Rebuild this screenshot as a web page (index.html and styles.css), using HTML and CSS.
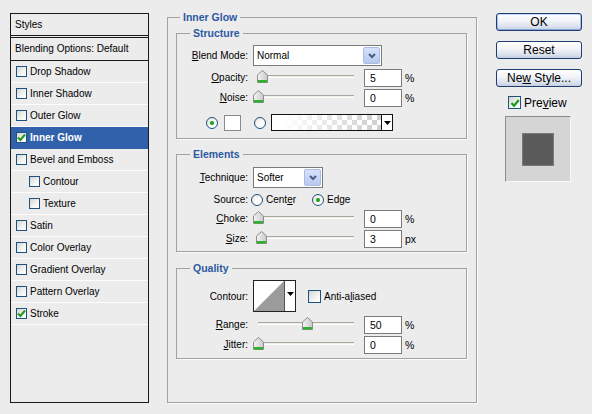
FILE: index.html
```html
<!DOCTYPE html>
<html>
<head>
<meta charset="utf-8">
<title>Layer Style - Inner Glow</title>
<link rel="stylesheet" href="styles.css">
</head>
<body>
<div class="dialog">
  <div class="styles-panel">
    <div class="sp-head">Styles</div>
    <div class="sp-blend">Blending Options: Default</div>
    <ul class="sp-list">
      <li class="sp-item"><span class="cb"></span>Drop Shadow</li>
      <li class="sp-item"><span class="cb"></span>Inner Shadow</li>
      <li class="sp-item"><span class="cb"></span>Outer Glow</li>
      <li class="sp-item selected"><span class="cb"><svg width="9" height="9" viewBox="0 0 9 9"><path d="M1 4.5 L3.4 7 L8 1.5" fill="none" stroke="#1d9a1d" stroke-width="2"/></svg></span>Inner Glow</li>
      <li class="sp-item"><span class="cb"></span>Bevel and Emboss</li>
      <li class="sp-item sub"><span class="cb"></span>Contour</li>
      <li class="sp-item sub"><span class="cb"></span>Texture</li>
      <li class="sp-item"><span class="cb"></span>Satin</li>
      <li class="sp-item"><span class="cb"></span>Color Overlay</li>
      <li class="sp-item"><span class="cb"></span>Gradient Overlay</li>
      <li class="sp-item"><span class="cb"></span>Pattern Overlay</li>
      <li class="sp-item"><span class="cb"><svg width="9" height="9" viewBox="0 0 9 9"><path d="M1 4.5 L3.4 7 L8 1.5" fill="none" stroke="#1d9a1d" stroke-width="2"/></svg></span>Stroke</li>
    </ul>
  </div>

  <div class="group outer">
    <div class="group-title">Inner Glow</div>

    <div class="group inner structure">
      <div class="group-title">Structure</div>
      <div class="row r21">
        <span class="lbl"><u>B</u>lend Mode:</span>
        <div class="select sel-blend"><span class="val">Normal</span><span class="arr"><svg width="8" height="6" viewBox="0 0 8 6"><path d="M1 1 L4 4 L7 1" fill="none" stroke="#4a5d82" stroke-width="2"/></svg></span></div>
      </div>
      <div class="row r19 mt2">
        <span class="lbl"><u>O</u>pacity:</span>
        <div class="slider"><span class="track"></span><svg class="thumb" style="left:4px" width="11" height="13" viewBox="0 0 11 13"><defs><linearGradient id="tg1" x1="0" y1="0" x2="1" y2="0"><stop offset="0" stop-color="#f4f4f4"/><stop offset="1" stop-color="#c9c9c9"/></linearGradient></defs><path d="M0.5 5 L5.5 0.5 L10.5 5 L10.5 12.5 L0.5 12.5 Z" fill="url(#tg1)" stroke="#8c8c8c"/><rect x="1" y="10" width="9" height="2.5" fill="#2fb12f"/></svg></div>
        <span class="num">5</span><span class="unit">%</span>
      </div>
      <div class="row r19 mt1">
        <span class="lbl"><u>N</u>oise:</span>
        <div class="slider"><span class="track"></span><svg class="thumb" style="left:0px" width="11" height="13" viewBox="0 0 11 13"><path d="M0.5 5 L5.5 0.5 L10.5 5 L10.5 12.5 L0.5 12.5 Z" fill="url(#tg1)" stroke="#8c8c8c"/><rect x="1" y="10" width="9" height="2.5" fill="#2fb12f"/></svg></div>
        <span class="num">0</span><span class="unit">%</span>
      </div>
      <div class="row r17 mt7 color-row">
        <span class="radio on"></span>
        <span class="swatch"></span>
        <span class="radio r2"></span>
        <div class="gradpick"><span class="grad"></span><span class="gp-arr"><svg width="7" height="4" viewBox="0 0 7 4"><path d="M0 0 H7 L3.5 4 Z" fill="#000"/></svg></span></div>
      </div>
    </div>

    <div class="group inner elements">
      <div class="group-title">Elements</div>
      <div class="row r21">
        <span class="lbl"><u>T</u>echnique:</span>
        <div class="select sel-tech"><span class="val">Softer</span><span class="arr"><svg width="8" height="6" viewBox="0 0 8 6"><path d="M1 1 L4 4 L7 1" fill="none" stroke="#4a5d82" stroke-width="2"/></svg></span></div>
      </div>
      <div class="row r17 mt3">
        <span class="lbl lbl-src">Source:</span>
        <span class="opt opt1"><span class="radio"></span><span>Cent<u>e</u>r</span></span>
        <span class="opt"><span class="radio on"></span><span>Ed<u>g</u>e</span></span>
      </div>
      <div class="row r19 mt1">
        <span class="lbl"><u>C</u>hoke:</span>
        <div class="slider"><span class="track"></span><svg class="thumb" style="left:0px" width="11" height="13" viewBox="0 0 11 13"><path d="M0.5 5 L5.5 0.5 L10.5 5 L10.5 12.5 L0.5 12.5 Z" fill="url(#tg1)" stroke="#8c8c8c"/><rect x="1" y="10" width="9" height="2.5" fill="#2fb12f"/></svg></div>
        <span class="num">0</span><span class="unit">%</span>
      </div>
      <div class="row r19 mt1">
        <span class="lbl"><u>S</u>ize:</span>
        <div class="slider"><span class="track"></span><svg class="thumb" style="left:3px" width="11" height="13" viewBox="0 0 11 13"><path d="M0.5 5 L5.5 0.5 L10.5 5 L10.5 12.5 L0.5 12.5 Z" fill="url(#tg1)" stroke="#8c8c8c"/><rect x="1" y="10" width="9" height="2.5" fill="#2fb12f"/></svg></div>
        <span class="num">3</span><span class="unit">px</span>
      </div>
    </div>

    <div class="group inner quality">
      <div class="group-title">Quality</div>
      <div class="row r32">
        <span class="lbl">Contour:</span>
        <div class="contour"><svg class="curve" width="30" height="30" viewBox="0 0 30 30"><polygon points="0,30 30,0 30,30" fill="#9b9b9b"/></svg><span class="ct-arr"><svg width="7" height="4" viewBox="0 0 7 4"><path d="M0 0 H7 L3.5 4 Z" fill="#000"/></svg></span></div>
        <span class="cb cb13 aa"></span><span>Anti-a<u>l</u>iased</span>
      </div>
      <div class="row r19 mt3">
        <span class="lbl"><u>R</u>ange:</span>
        <div class="slider"><span class="track"></span><svg class="thumb" style="left:49px" width="11" height="13" viewBox="0 0 11 13"><path d="M0.5 5 L5.5 0.5 L10.5 5 L10.5 12.5 L0.5 12.5 Z" fill="url(#tg1)" stroke="#8c8c8c"/><rect x="1" y="10" width="9" height="2.5" fill="#2fb12f"/></svg></div>
        <span class="num">50</span><span class="unit">%</span>
      </div>
      <div class="row r19 mt1">
        <span class="lbl"><u>J</u>itter:</span>
        <div class="slider"><span class="track"></span><svg class="thumb" style="left:0px" width="11" height="13" viewBox="0 0 11 13"><path d="M0.5 5 L5.5 0.5 L10.5 5 L10.5 12.5 L0.5 12.5 Z" fill="url(#tg1)" stroke="#8c8c8c"/><rect x="1" y="10" width="9" height="2.5" fill="#2fb12f"/></svg></div>
        <span class="num">0</span><span class="unit">%</span>
      </div>
    </div>
  </div>

  <div class="side">
    <div class="btn btn-default">OK</div>
    <div class="btn">Reset</div>
    <div class="btn">Ne<u>w</u> Style...</div>
    <div class="preview-row"><span class="cb cb13"><svg width="10" height="10" viewBox="0 0 10 10"><path d="M1.5 5 L4 7.8 L8.8 2" fill="none" stroke="#1d9a1d" stroke-width="2.2"/></svg></span><span>Pre<u>v</u>iew</span></div>
    <div class="preview"><span class="pv-square"></span></div>
  </div>
</div>
</body>
</html>
```
FILE: styles.css
```css
* { box-sizing: border-box; }
html, body { margin: 0; padding: 0; }
body {
  width: 592px;
  height: 414px;
  overflow: hidden;
  background: #ececec;
  font-family: "Liberation Sans", Arial, sans-serif;
  font-size: 10px;
  color: #000;
}
u { text-decoration: underline; text-underline-offset: 1px; }

.dialog {
  display: flex;
  align-items: flex-start;
  padding: 13px 0 0 10px;
}

/* ---------- Styles list ---------- */
.styles-panel {
  width: 139px;
  height: 390px;
  border: 1px solid #1a1a1a;
  background: #ececec;
  flex: none;
}
.sp-head {
  height: 24px;
  border-bottom: 3px double #1a1a1a;
  padding-left: 4px;
  line-height: 21px;
}
.sp-blend {
  height: 23px;
  border-bottom: 1px solid #1a1a1a;
  padding-left: 4px;
  line-height: 22px;
}
.sp-list { list-style: none; margin: 0; padding: 0; }
.sp-item {
  display: flex;
  align-items: center;
  height: 22px;
  border-bottom: 1px solid #fdfdfd;
  padding-left: 5px;
}
.sp-item.sub { padding-left: 18px; }
.sp-item.selected {
  background: #3161ab;
  color: #fff;
  font-weight: bold;
  border-bottom-color: #3161ab;
}

.cb {
  flex: none;
  width: 11px;
  height: 11px;
  margin-right: 3px;
  border: 1px solid #1c5180;
  background: linear-gradient(135deg, #d4d4ce 0%, #f4f4f2 60%, #fff 100%);
  display: flex;
  align-items: center;
  justify-content: center;
}
.cb13 { width: 13px; height: 13px; }

/* ---------- Group boxes ---------- */
.group {
  position: relative;
  border: 1px solid #a2a2a2;
  box-shadow: 1px 1px 0 #fbfbfb;
}
.group-title {
  position: absolute;
  top: -7px;
  left: 12px;
  padding: 0 3px;
  background: #ececec;
  color: #2c5aa2;
  font-weight: bold;
  font-size: 10.5px;
  line-height: 13px;
}
.outer {
  flex: none;
  width: 310px;
  height: 386px;
  margin: 4px 0 0 18px;
  padding: 15px 0 0 8px;
}
.inner { width: 291px; }
.inner .group-title { left: 13px; }
.structure { height: 106px; padding-top: 11px; }
.elements { height: 98px; margin-top: 15px; padding-top: 12px; }
.quality { height: 91px; margin-top: 16px; padding-top: 11px; }

/* ---------- Rows ---------- */
.row { display: flex; align-items: center; }
.r17 { height: 17px; }
.r19 { height: 19px; }
.r21 { height: 21px; }
.r32 { height: 32px; }
.mt1 { margin-top: 1px; }
.mt2 { margin-top: 2px; }
.mt3 { margin-top: 3px; }
.mt7 { margin-top: 7px; }

.lbl {
  flex: none;
  width: 71px;
  margin-right: 5px;
  text-align: right;
}
.lbl-src { margin-right: 3px; }

/* select */
.select {
  flex: none;
  display: flex;
  height: 21px;
  border: 1px solid #7b7b7b;
  background: #fff;
}
.sel-blend { width: 129px; }
.sel-tech { width: 70px; }
.select .val { flex: 1; padding-left: 3px; line-height: 19px; }
.select .arr {
  flex: none;
  width: 17px;
  margin: 1px;
  border: 1px solid #a8bce4;
  border-radius: 2px;
  background: linear-gradient(#d6e1fb, #b7c9ef);
  display: flex;
  align-items: center;
  justify-content: center;
}

/* slider */
.slider {
  position: relative;
  flex: none;
  width: 106px;
  height: 19px;
}
.track {
  position: absolute;
  left: 5px;
  top: 7px;
  width: 96px;
  height: 3px;
  border-top: 1px solid #a9a9a3;
  border-bottom: 1px solid #ffffff;
  background: #f0efe6;
}
.thumb { position: absolute; top: 2px; }

.num {
  flex: none;
  width: 38px;
  height: 18px;
  margin-left: 5px;
  border: 1px solid #7b7b7b;
  background: #fff;
  padding-left: 5px;
  font-size: 10.5px;
  line-height: 16px;
}
.unit { margin-left: 3px; font-size: 10.5px; }

/* radios */
.radio {
  flex: none;
  width: 12px;
  height: 12px;
  border: 1px solid #1c5180;
  border-radius: 50%;
  background: radial-gradient(circle at 65% 65%, #ffffff 30%, #dcdcd6 100%);
  display: flex;
  align-items: center;
  justify-content: center;
}
.radio.on::after {
  content: "";
  width: 4px;
  height: 4px;
  border-radius: 50%;
  background: #22a322;
  box-shadow: 0 0 1px #7fd07f;
}

.color-row { padding-left: 29px; }
.swatch {
  flex: none;
  width: 17px;
  height: 16px;
  margin-left: 6px;
  border: 1px solid #8a8a8a;
  background: #fff;
}
.radio.r2 { margin-left: 13px; }
.gradpick {
  flex: none;
  display: flex;
  width: 122px;
  height: 17px;
  margin-left: 5px;
  border: 1px solid #111;
  background: #fff;
}
.grad {
  flex: 1;
  background:
    linear-gradient(to right, #ffffff 8%, rgba(255,255,255,0) 95%),
    conic-gradient(#d0d0d0 25%, #ffffff 0 50%, #d0d0d0 0 75%, #ffffff 0) 0 0 / 10px 10px;
}
.gp-arr {
  flex: none;
  width: 11px;
  border-left: 1px solid #111;
  display: flex;
  align-items: center;
  justify-content: center;
}

/* source options */
.opt { display: flex; align-items: center; gap: 3px; flex: none; }
.opt1 { width: 61px; }

/* contour */
.contour {
  flex: none;
  display: flex;
  width: 43px;
  height: 32px;
  border: 1px solid #222;
  background: #fff;
}
.curve { display: block; flex: none; }
.ct-arr {
  flex: none;
  width: 11px;
  border-left: 1px solid #555;
  display: flex;
  align-items: flex-start;
  justify-content: center;
  padding-top: 11px;
}
.aa { margin-left: 12px; }

/* ---------- Right column ---------- */
.side {
  flex: none;
  width: 86px;
  margin-left: 19px;
  display: flex;
  flex-direction: column;
}
.btn {
  height: 18px;
  border: 1px solid #1e3e72;
  border-radius: 3px;
  background: linear-gradient(#ffffff 0%, #f1f3f8 45%, #d9e0ec 80%, #c4cee0 100%);
  font-size: 12px;
  line-height: 16px;
  text-align: center;
}
.btn + .btn { margin-top: 10px; }
.btn-default {
  box-shadow: inset 0 1px 0 #c6d5f4, inset 0 -1px 0 #8aa6dc, inset 1px 0 0 #a9bfea, inset -1px 0 0 #a9bfea;
}
.preview-row {
  display: flex;
  align-items: center;
  height: 15px;
  margin-top: 8px;
  padding-left: 12px;
  font-size: 12px;
}
.preview-row .cb { margin-right: 3px; }
.preview {
  width: 66px;
  height: 66px;
  margin: 6px 0 0 9px;
  border-top: 1px solid #8c8c8c;
  border-left: 1px solid #8c8c8c;
  border-right: 1px solid #f6f6f6;
  border-bottom: 1px solid #f6f6f6;
  background: #d5d5d5;
  display: flex;
  align-items: center;
  justify-content: center;
}
.pv-square {
  width: 32px;
  height: 33px;
  background: #5a5a5a;
  box-shadow: inset 0 0 1px 1px #7c7c7c;
}
```
